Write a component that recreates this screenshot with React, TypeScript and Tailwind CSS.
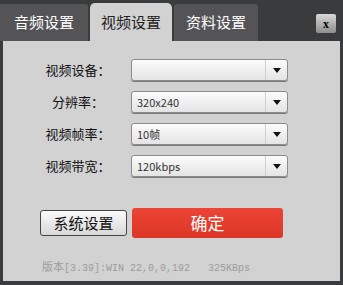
import React from 'react';

const cjk = { fontFamily: '"Noto Sans CJK SC", "Liberation Sans", sans-serif' };

const rows = [
	{ label: '视频设备：', value: '' },
	{ label: '分辨率：', value: '320x240' },
	{ label: '视频帧率：', value: '10帧' },
	{ label: '视频带宽：', value: '120kbps' },
];

function Select({ value }: { value: string }) {
	return (
		<div className="flex h-[22px] w-[157px] items-center rounded-[3px] border border-[#8c8c8c] bg-gradient-to-b from-[#fbfbfb] to-[#e4e4e4] shadow-[0_1px_0_#7a7a7a]">
			<span className="flex-1 pl-[5px] text-[11px] text-[#333]" style={cjk}>
				{value}
			</span>
			<div className="flex h-full w-[22px] items-center justify-center border-l border-[#d0d0d0]">
				<svg width="8" height="5" viewBox="0 0 8 5">
					<path d="M0 0 L8 0 L4 5 Z" fill="#111" />
				</svg>
			</div>
		</div>
	);
}

export default function App() {
	return (
		<div className="flex h-[285px] w-[343px] flex-col bg-[#3a3b3d]" style={cjk}>
			{/* tabs */}
			<div className="flex h-[41px] shrink-0 items-end">
				<div className="flex h-[37px] w-[88px] items-center justify-center rounded-tr-[3px] bg-[#545456] text-[15px] text-white">
					音频设置
				</div>
				<div className="ml-[2px] flex h-[38px] w-[82px] items-center justify-center rounded-t-[5px] bg-[#d2d2d2] text-[15px] text-[#222]">
					视频设置
				</div>
				<div className="ml-[2px] flex h-[37px] w-[84px] items-center justify-center rounded-t-[3px] bg-[#545456] text-[15px] text-white">
					资料设置
				</div>
				<div className="flex-1" />
				<div className="mr-[7px] mb-[8px] flex h-[19px] w-[20px] items-center justify-center rounded-[2px] bg-gradient-to-b from-[#d8d8d8] to-[#8e8e8e] text-[12px] font-bold leading-none text-black" style={{ fontFamily: '"Liberation Serif", serif' }}>
					x
				</div>
			</div>

			{/* body */}
			<div className="mx-[3px] mb-[4px] flex flex-1 flex-col bg-[#d2d2d2]">
				<div className="flex flex-col gap-[10px] pt-[18px]">
					{rows.map((r) => (
						<div key={r.label} className="flex items-center">
							<div className="ml-[35px] w-[80px] text-center text-[13px] text-[#111]">{r.label}</div>
							<div className="ml-[13px]">
								<Select value={r.value} />
							</div>
						</div>
					))}
				</div>

				<div className="mt-[31px] flex items-center">
					<div className="ml-[37px] flex h-[26px] w-[87px] items-center justify-center rounded-[3px] border border-[#444] bg-gradient-to-b from-[#fafafa] to-[#d8d8d8] text-[15px] text-[#111]">
						系统设置
					</div>
					<div className="ml-[5px] flex h-[30px] w-[151px] items-center justify-center rounded-[3px] bg-gradient-to-b from-[#ec4535] to-[#dc3526] text-[17px] text-white">
						确定
					</div>
				</div>

				<div className="mt-[20px] ml-[39px] text-[10px] text-[#9c9c9c]" style={{ fontFamily: '"Liberation Mono", "Noto Sans CJK SC", monospace' }}>
					<span className="text-[11px]" style={cjk}>版本</span>[3.39]:WIN 22,0,0,192&nbsp;&nbsp;&nbsp;325KBps
				</div>
			</div>
		</div>
	);
}
